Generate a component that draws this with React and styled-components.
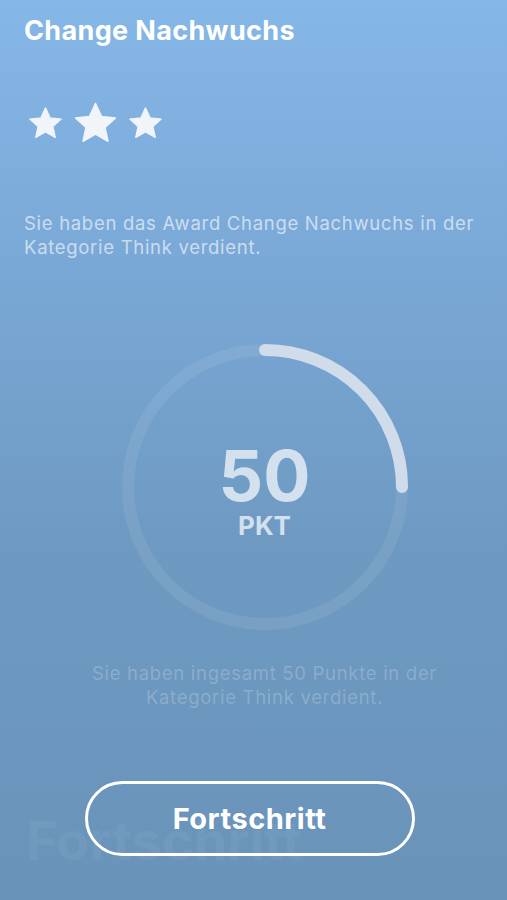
import React from "react";
import styled, { createGlobalStyle } from "styled-components";

const Global = createGlobalStyle`
  html, body { margin: 0; padding: 0; }
  body { font-family: Inter, "Liberation Sans", sans-serif; }
`;

const Screen = styled.div`
  position: relative;
  width: 507px;
  height: 900px;
  overflow: hidden;
  background: linear-gradient(180deg, #85b7e7 0%, #7aa8d6 30%, #6e9ac2 60%, #6a93b9 100%);
  display: flex;
  flex-direction: column;
  padding: 14px 24px 0;
  box-sizing: border-box;
`;

const Title = styled.h1`
  margin: 0;
  font-size: 27px;
  line-height: 34px;
  font-weight: 700;
  color: #ffffff;
  letter-spacing: 0.35px;
`;

const Stars = styled.div`
  display: flex;
  align-items: center;
  gap: 8px;
  margin-top: 52px;
  margin-left: 3px;
`;

const Star = ({ size }) => (
  <svg width={size} height={size} viewBox="0 0 24 24">
    <path
      d="M12 1.8l3.05 6.6 7.15.75-5.35 4.85 1.5 7.05L12 17.45 5.65 21.05l1.5-7.05L1.8 9.15l7.15-.75z"
      fill="#f1f4f9"
      stroke="#f1f4f9"
      strokeWidth="0.8"
      strokeLinejoin="round"
    />
  </svg>
);

const Text = styled.p`
  margin: ${(p) => p.$mt || 0}px 0 0 ${(p) => p.$ml || 0}px;
  font-size: 18.5px;
  line-height: 24px;
  letter-spacing: 0.7px;
  color: ${(p) => p.$color};
  text-align: ${(p) => p.$align || "left"};
  white-space: ${(p) => (p.$nowrap ? "nowrap" : "normal")};
`;

const RingWrap = styled.div`
  position: relative;
  align-self: center;
  width: 300px;
  height: 300px;
  margin-top: 78px;
  margin-left: 22px;
  display: flex;
  flex-direction: column;
  align-items: center;
  justify-content: center;
`;

const RingSvg = styled.svg`
  position: absolute;
  inset: 0;
`;

const Points = styled.div`
  font-size: 70px;
  line-height: 70px;
  font-weight: 700;
  color: #d3e1ee;
  margin-top: 8px;
`;

const Unit = styled.div`
  font-size: 26px;
  line-height: 30px;
  font-weight: 700;
  color: #d3e1ee;
  margin-top: 0;
`;

const Button = styled.button`
  align-self: center;
  margin-top: 72px;
  margin-right: 8px;
  width: 330px;
  height: 75px;
  border: 3px solid #ffffff;
  border-radius: 38px;
  background: transparent;
  color: #ffffff;
  font-family: Inter, "Liberation Sans", sans-serif;
  font-size: 29px;
  font-weight: 700;
  letter-spacing: 0.5px;
  position: relative;
  z-index: 1;
`;

const Ghost = styled.div`
  position: absolute;
  left: 26px;
  top: 808px;
  font-size: 54px;
  font-weight: 700;
  color: rgba(255, 255, 255, 0.05);
`;

export default function App() {
  const r = 137;
  const c = 2 * Math.PI * r;
  return (
    <>
      <Global />
      <Screen>
        <Title>Change Nachwuchs</Title>
        <Stars>
          <Star size={37} />
          <Star size={47} />
          <Star size={37} />
        </Stars>
        <Text $mt={64} $color="rgba(255,255,255,0.62)">
          Sie haben das Award Change Nachwuchs in der Kategorie Think verdient.
        </Text>
        <RingWrap>
          <RingSvg width="300" height="300" viewBox="0 0 300 300">
            <circle cx="150" cy="150" r={r} fill="none" stroke="rgba(255,255,255,0.08)" strokeWidth="12" />
            <circle
              cx="150"
              cy="150"
              r={r}
              fill="none"
              stroke="#d0dcea"
              strokeWidth="12"
              strokeLinecap="round"
              strokeDasharray={`${c * 0.25} ${c}`}
              transform="rotate(-90 150 150)"
            />
          </RingSvg>
          <Points>50</Points>
          <Unit>PKT</Unit>
        </RingWrap>
        <Text $mt={24} $ml={22} $align="center" $nowrap $color="rgba(255,255,255,0.22)">
          Sie haben ingesamt 50 Punkte in der
          <br />
          Kategorie Think verdient.
        </Text>
        <Button>Fortschritt</Button>
        <Ghost>Fortschritt</Ghost>
      </Screen>
    </>
  );
}
